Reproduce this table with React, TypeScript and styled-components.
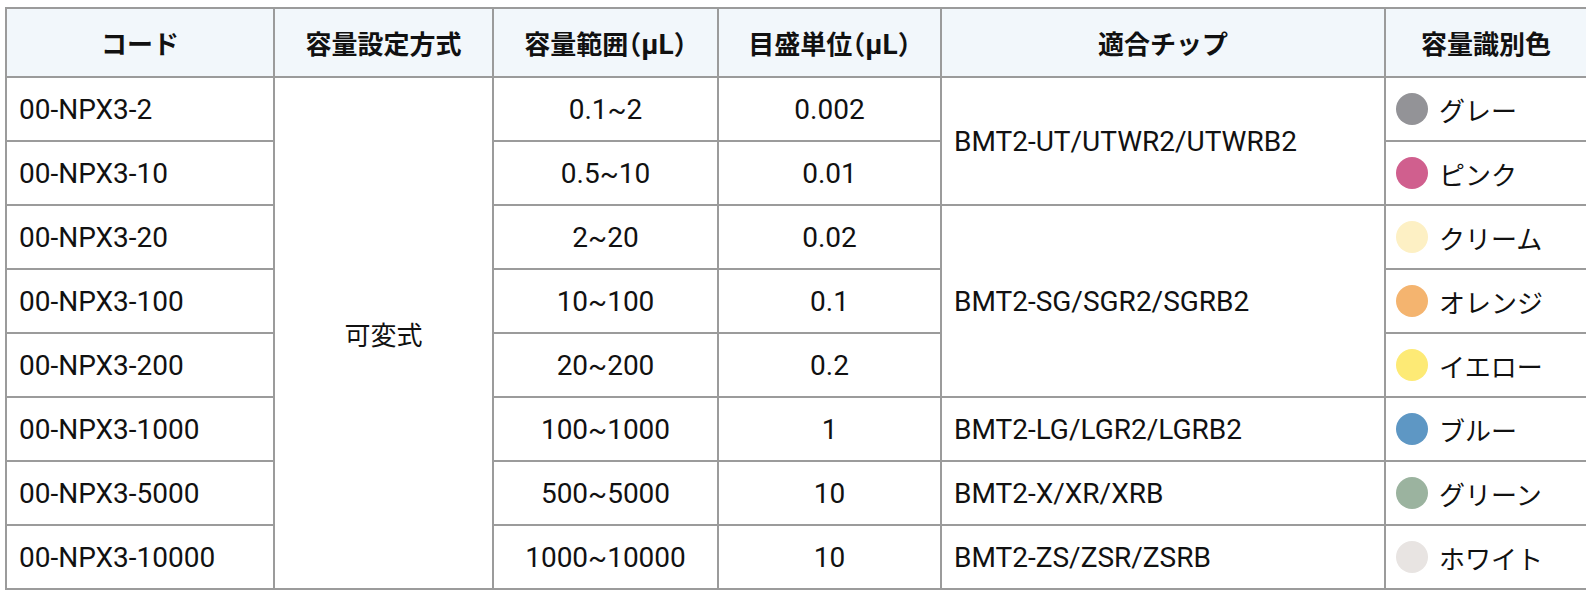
import React from "react";
import styled, { createGlobalStyle } from "styled-components";

const GlobalStyle = createGlobalStyle`
  html, body {
    margin: 0;
    padding: 0;
    background: #ffffff;
  }
  body {
    font-family: Roboto, "Noto Sans CJK JP", sans-serif;
    color: #111111;
  }
`;

const Page = styled.div`
  padding: 7px 0 0 5px;
`;

const Table = styled.table`
  width: 1581px;
  border-collapse: collapse;
  table-layout: fixed;
  font-size: 28px;
`;

const HeadCell = styled.th`
  height: 67px;
  padding: 0 12px;
  background: #f2f7fb;
  border: 2px solid #9b9b9b;
  font-size: 26px;
  font-weight: 700;
  text-align: center;
  white-space: nowrap;
`;

const Unit = styled.span`
  font-size: 28px;
`;

const Paren = styled.span`
  font-feature-settings: "halt";
`;

const Cell = styled.td<{ $align?: "left" | "center"; $jp?: boolean }>`
  height: 62px;
  padding: 0 12px;
  border: 2px solid #9b9b9b;
  font-size: ${(p) => (p.$jp ? "26px" : "28px")};
  text-align: ${(p) => p.$align ?? "left"};
  vertical-align: middle;
  white-space: nowrap;
`;

const ColorCell = styled(Cell)`
  padding: 0 10px;
`;

const ColorLabel = styled.div`
  display: flex;
  align-items: center;
  gap: 11px;
  font-size: 26px;
`;

const Dot = styled.span<{ $color: string }>`
  flex: none;
  width: 32px;
  height: 32px;
  border-radius: 50%;
  background: ${(p) => p.$color};
`;

type Row = {
  code: string;
  range: string;
  unit: string;
  color: string;
  colorName: string;
};

const rows: Row[] = [
  { code: "00-NPX3-2", range: "0.1~2", unit: "0.002", color: "#939397", colorName: "グレー" },
  { code: "00-NPX3-10", range: "0.5~10", unit: "0.01", color: "#d05f8e", colorName: "ピンク" },
  { code: "00-NPX3-20", range: "2~20", unit: "0.02", color: "#fdf0c4", colorName: "クリーム" },
  { code: "00-NPX3-100", range: "10~100", unit: "0.1", color: "#f4b46f", colorName: "オレンジ" },
  { code: "00-NPX3-200", range: "20~200", unit: "0.2", color: "#fdea75", colorName: "イエロー" },
  { code: "00-NPX3-1000", range: "100~1000", unit: "1", color: "#5e97c4", colorName: "ブルー" },
  { code: "00-NPX3-5000", range: "500~5000", unit: "10", color: "#9bb39f", colorName: "グリーン" },
  { code: "00-NPX3-10000", range: "1000~10000", unit: "10", color: "#e8e4e2", colorName: "ホワイト" },
];

// tip column cells, keyed by the row index where they start
const tips: Record<number, { text: string; span: number }> = {
  0: { text: "BMT2-UT/UTWR2/UTWRB2", span: 2 },
  2: { text: "BMT2-SG/SGR2/SGRB2", span: 3 },
  5: { text: "BMT2-LG/LGR2/LGRB2", span: 1 },
  6: { text: "BMT2-X/XR/XRB", span: 1 },
  7: { text: "BMT2-ZS/ZSR/ZSRB", span: 1 },
};

const App = () => {
  return (
    <Page>
      <GlobalStyle />
      <Table>
        <colgroup>
          <col style={{ width: 268 }} />
          <col style={{ width: 219 }} />
          <col style={{ width: 225 }} />
          <col style={{ width: 223 }} />
          <col style={{ width: 444 }} />
          <col style={{ width: 202 }} />
        </colgroup>
        <thead>
          <tr>
            <HeadCell>コード</HeadCell>
            <HeadCell>容量設定方式</HeadCell>
            <HeadCell>
              容量範囲<Paren>（</Paren>
              <Unit>μL</Unit>
              <Paren>）</Paren>
            </HeadCell>
            <HeadCell>
              目盛単位<Paren>（</Paren>
              <Unit>μL</Unit>
              <Paren>）</Paren>
            </HeadCell>
            <HeadCell>適合チップ</HeadCell>
            <HeadCell>容量識別色</HeadCell>
          </tr>
        </thead>
        <tbody>
          {rows.map((r, i) => (
            <tr key={r.code}>
              <Cell>{r.code}</Cell>
              {i === 0 && (
                <Cell $align="center" $jp rowSpan={rows.length}>
                  可変式
                </Cell>
              )}
              <Cell $align="center">{r.range}</Cell>
              <Cell $align="center">{r.unit}</Cell>
              {tips[i] && <Cell rowSpan={tips[i].span}>{tips[i].text}</Cell>}
              <ColorCell>
                <ColorLabel>
                  <Dot $color={r.color} />
                  {r.colorName}
                </ColorLabel>
              </ColorCell>
            </tr>
          ))}
        </tbody>
      </Table>
    </Page>
  );
};

export default App;
